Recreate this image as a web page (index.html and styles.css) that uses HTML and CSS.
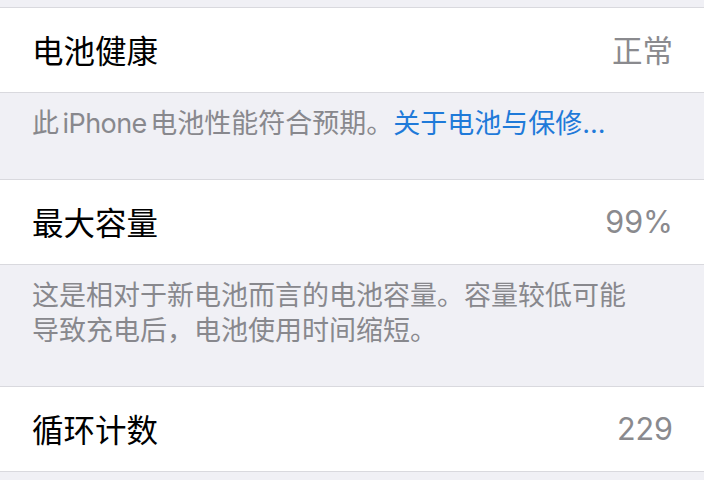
FILE: index.html
```html
<!DOCTYPE html>
<html lang="zh-CN">
<head>
    <meta charset="UTF-8">
    <title>电池健康</title>
    <meta name="viewport" content="width=device-width, initial-scale=1">
    <link rel="stylesheet" href="styles.css">
</head>
<body>
<div class="spacer"></div>

<div class="group">
    <div class="row">
        <span class="label">电池健康</span>
        <span class="value">正常</span>
    </div>
</div>
<p class="footer tight">此 <span class="latin">iPhone</span> 电池性能符合预期。<a href="#">关于电池与保修...</a></p>

<div class="group">
    <div class="row">
        <span class="label">最大容量</span>
        <span class="value">99%</span>
    </div>
</div>
<p class="footer">这是相对于新电池而言的电池容量。容量较低可能<br>导致充电后，电池使用时间缩短。</p>

<div class="group">
    <div class="row">
        <span class="label">循环计数</span>
        <span class="value">229</span>
    </div>
</div>
</body>
</html>
```

FILE: styles.css
```css
body {
    margin: 0;
    font-family: Inter, "Noto Sans CJK SC", sans-serif;
    background-color: #f0f0f5;
    color: #000000;
    overflow: hidden;
}

.spacer {
    height: 7px;
}

.group {
    background-color: #ffffff;
    border-top: 1px solid #d9d9de;
    border-bottom: 1px solid #d9d9de;
}

.row {
    display: flex;
    align-items: center;
    justify-content: space-between;
    height: 84px;
    padding: 0 31px 0 32px;
}

.label {
    font-size: 31.5px;
    margin-top: -2px;
}

.value {
    font-size: 30.5px;
    color: #8a8a8e;
    margin-top: -2px;
}

.footer {
    margin: 0;
    padding: 13px 32px 38px 32px;
    font-size: 27px;
    line-height: 35px;
    color: #88888d;
}

.tight {
    word-spacing: -4px;
}

.latin {
    letter-spacing: -0.6px;
}

.footer a {
    color: #1f7ad9;
    text-decoration: none;
}
```
